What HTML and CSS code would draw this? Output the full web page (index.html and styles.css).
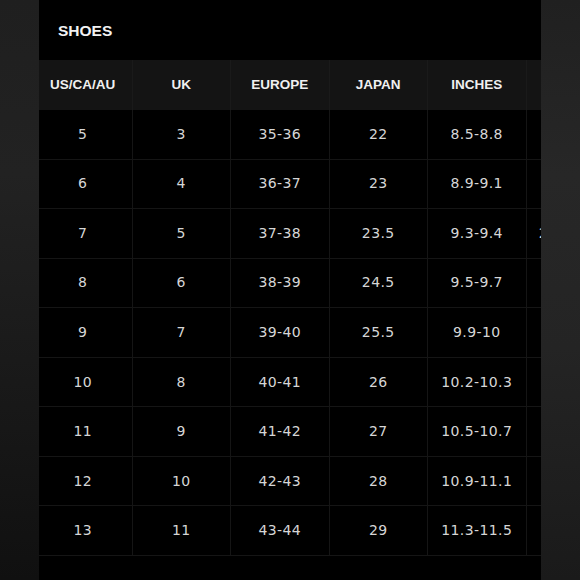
FILE: index.html
```html
<!DOCTYPE html>
<html>
<head>
<meta charset="utf-8">
<link rel="stylesheet" href="styles.css">
</head>
<body>
<div class="side side-left"></div>
<main class="panel">
  <div class="title">SHOES</div>
  <div class="grid">
    <div class="cell head">US/CA/AU</div><div class="cell head">UK</div><div class="cell head">EUROPE</div><div class="cell head">JAPAN</div><div class="cell head">INCHES</div><div class="cell head">CM</div>
    <div class="cell">5</div><div class="cell">3</div><div class="cell">35-36</div><div class="cell">22</div><div class="cell">8.5-8.8</div><div class="cell">22.5</div>
    <div class="cell">6</div><div class="cell">4</div><div class="cell">36-37</div><div class="cell">23</div><div class="cell">8.9-9.1</div><div class="cell">23</div>
    <div class="cell">7</div><div class="cell">5</div><div class="cell">37-38</div><div class="cell">23.5</div><div class="cell">9.3-9.4</div><div class="cell">23.5–24.0</div>
    <div class="cell">8</div><div class="cell">6</div><div class="cell">38-39</div><div class="cell">24.5</div><div class="cell">9.5-9.7</div><div class="cell">24.5</div>
    <div class="cell">9</div><div class="cell">7</div><div class="cell">39-40</div><div class="cell">25.5</div><div class="cell">9.9-10</div><div class="cell">25</div>
    <div class="cell">10</div><div class="cell">8</div><div class="cell">40-41</div><div class="cell">26</div><div class="cell">10.2-10.3</div><div class="cell">26</div>
    <div class="cell">11</div><div class="cell">9</div><div class="cell">41-42</div><div class="cell">27</div><div class="cell">10.5-10.7</div><div class="cell">27</div>
    <div class="cell">12</div><div class="cell">10</div><div class="cell">42-43</div><div class="cell">28</div><div class="cell">10.9-11.1</div><div class="cell">28</div>
    <div class="cell">13</div><div class="cell">11</div><div class="cell">43-44</div><div class="cell">29</div><div class="cell">11.3-11.5</div><div class="cell">29</div>
  </div>
</main>
<div class="side side-right"></div>
</body>
</html>
```

FILE: styles.css
```css
html, body {
  margin: 0;
  padding: 0;
  width: 580px;
  height: 580px;
  overflow: hidden;
  background: #141414;
}
body {
  display: flex;
}
.side {
  height: 580px;
}
.side-left {
  width: 39px;
  background: linear-gradient(180deg, #1f1f1f 0%, #222222 30%, #181818 70%, #101010 100%);
}
.side-right {
  flex: 1;
  background: linear-gradient(180deg, #202020 0%, #272727 30%, #242424 60%, #1a1a1a 100%);
}
.panel {
  width: 502px;
  height: 580px;
  background: #000;
  overflow: hidden;
}
.title {
  height: 60px;
  display: flex;
  align-items: center;
  padding-left: 19px;
  padding-top: 2px;
  box-sizing: border-box;
  font-family: "Liberation Sans", Arial, sans-serif;
  font-weight: bold;
  font-size: 15.5px;
  color: #f2f2f2;
}
.grid {
  display: grid;
  grid-template-columns: repeat(6, 98.5px);
  grid-auto-rows: 49.55px;
  grid-template-rows: 50px;
  margin-left: -5px;
  width: 591px;
}
.cell {
  display: flex;
  align-items: center;
  justify-content: center;
  box-sizing: border-box;
  border-right: 1px solid #151515;
  border-bottom: 1px solid #151515;
  font-family: "DejaVu Sans", sans-serif;
  font-size: 14px;
  letter-spacing: 0.4px;
  color: #d6d6d6;
  white-space: nowrap;
  padding-bottom: 1px;
}
.head {
  background: #141414;
  font-family: "Liberation Sans", Arial, sans-serif;
  font-weight: bold;
  font-size: 13.5px;
  letter-spacing: 0;
  color: #f0f0f0;
  border-bottom: none;
  border-right-color: #1a1a1a;
}
```
